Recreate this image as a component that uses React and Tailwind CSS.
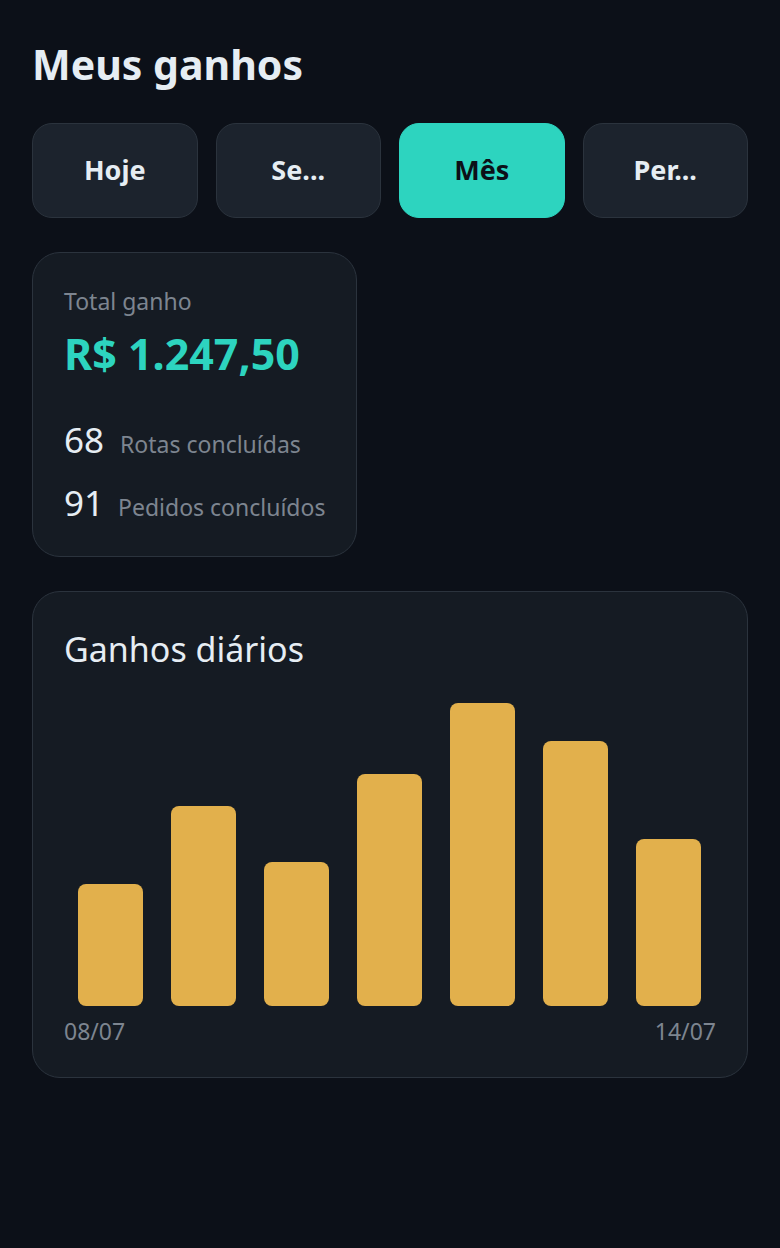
import React from "react";

const tabs = ["Hoje", "Se...", "Mês", "Per..."];
const bars = [122, 200, 144, 232, 303, 265, 167];

export default function App() {
  return (
    <div
      className="min-h-screen bg-[#0c1018] px-8 pt-[34px] pb-10 text-[#e6edf3]"
      style={{ fontFamily: '"Noto Sans", sans-serif' }}
    >
      <h1 className="text-[41px] font-bold leading-[60px]">Meus ganhos</h1>

      {/* filtros de periodo */}
      <div className="mt-[29px] grid grid-cols-4 gap-[18px]">
        {tabs.map((t) => (
          <button
            key={t}
            className={
              t === "Mês"
                ? "h-[95px] rounded-[20px] border border-[#2dd4bf] bg-[#2dd4bf] text-[27px] font-bold text-[#0c1018]"
                : "h-[95px] rounded-[20px] border border-[#2b333d] bg-[#1c232d] text-[27px] font-bold text-[#e6edf3]"
            }
          >
            {t}
          </button>
        ))}
      </div>

      {/* resumo */}
      <div className="mt-[34px] w-fit rounded-[28px] border border-[#2b333d] bg-[#151b23] px-[31px] pt-[32px] pb-[29px]">
        <p className="text-[23px] leading-[32px] text-[#7d8590]">Total ganho</p>
        <p className="mt-[11px] text-[43px] font-bold leading-[52px] text-[#2dd4bf]">
          R$ 1.247,50
        </p>
        <div className="mt-[36px] flex items-baseline gap-[16px]">
          <span className="text-[35px] leading-[48px] text-[#e6edf3]">68</span>
          <span className="text-[23px] text-[#7d8590]">Rotas concluídas</span>
        </div>
        <div className="mt-[15px] flex items-baseline gap-[14px]">
          <span className="text-[35px] leading-[48px] text-[#e6edf3]">91</span>
          <span className="text-[23px] text-[#7d8590]">Pedidos concluídos</span>
        </div>
      </div>

      {/* grafico */}
      <div className="mt-[34px] rounded-[28px] border border-[#2b333d] bg-[#151b23] px-[31px] pt-[33px] pb-[30px]">
        <h2 className="text-[34px] leading-[48px] text-[#e6edf3]">Ganhos diários</h2>
        <div className="mt-[26px] flex h-[307px] items-end gap-[28px] px-[14px]">
          {bars.map((h, i) => (
            <div
              key={i}
              className="w-[65px] rounded-[8px] bg-[#e2b04c]"
              style={{ height: h }}
            />
          ))}
        </div>
        <div className="mt-[9px] flex justify-between text-[23px] leading-[32px] text-[#7d8590]">
          <span>08/07</span>
          <span>14/07</span>
        </div>
      </div>
    </div>
  );
}
